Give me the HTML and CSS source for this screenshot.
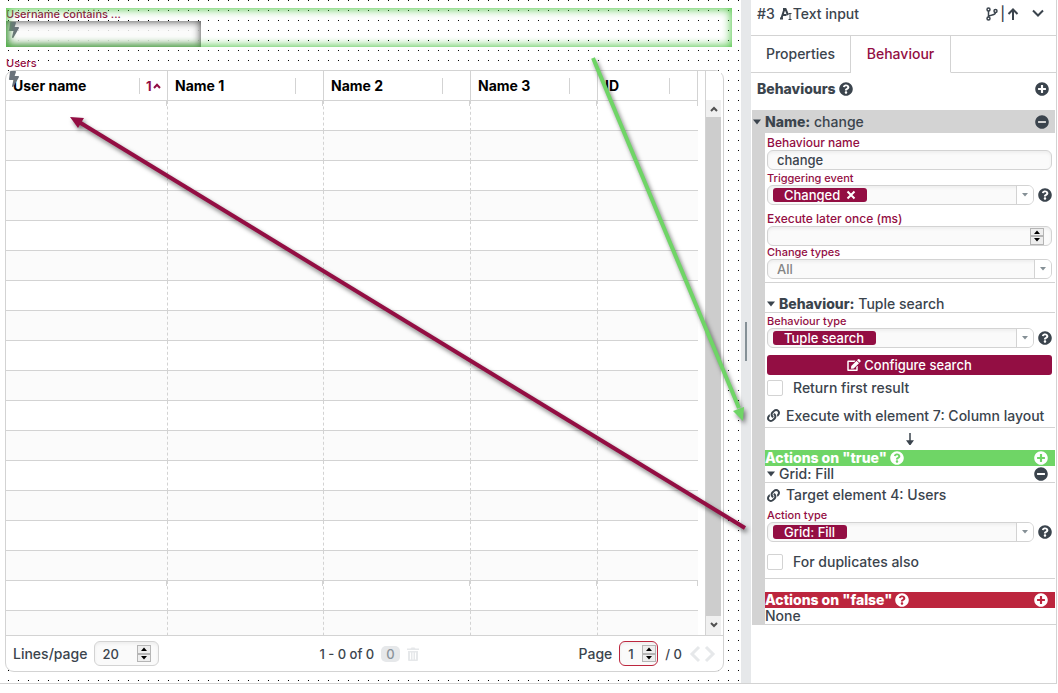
FILE: index.html
```
<!doctype html>
<html lang="en">
    <head>
        <meta charset="UTF-8" />
        <meta name="viewport" content="width=device-width, initial-scale=1.0" />
        <title>Screen editor</title>
        <link rel="stylesheet" href="styles.css">
    </head>
    <body>
        <svg class="sprite" aria-hidden="true">
            <symbol id="i-help" viewBox="0 0 512 512"><path d="M504 256c0 136.997-111.043 248-248 248S8 392.997 8 256C8 119.083 119.043 8 256 8s248 111.083 248 248zM262.655 90c-54.497 0-89.255 22.957-116.549 63.758-3.536 5.286-2.353 12.415 2.715 16.258l34.699 26.31c5.205 3.947 12.621 3.008 16.665-2.122 17.864-22.658 30.113-35.797 57.303-35.797 20.429 0 45.698 13.148 45.698 32.958 0 14.976-12.363 22.667-32.534 33.976C247.128 238.528 216 254.941 216 296v4c0 6.627 5.373 12 12 12h56c6.627 0 12-5.373 12-12v-1.333c0-28.462 83.186-29.647 83.186-106.667 0-58.002-60.165-102-116.531-102zM256 338c-25.365 0-46 20.635-46 46 0 25.364 20.635 46 46 46s46-20.636 46-46c0-25.365-20.635-46-46-46z"/></symbol>
            <symbol id="i-plus" viewBox="0 0 512 512"><path d="M256 8C119 8 8 119 8 256s111 248 248 248 248-111 248-248S393 8 256 8zm144 276c0 6.6-5.4 12-12 12h-92v92c0 6.6-5.4 12-12 12h-56c-6.6 0-12-5.4-12-12v-92h-92c-6.6 0-12-5.4-12-12v-56c0-6.6 5.4-12 12-12h92v-92c0-6.6 5.4-12 12-12h56c6.6 0 12 5.4 12 12v92h92c6.6 0 12 5.4 12 12v56z"/></symbol>
            <symbol id="i-minus" viewBox="0 0 512 512"><path d="M256 8C119 8 8 119 8 256s111 248 248 248 248-111 248-248S393 8 256 8zM124 296c-6.6 0-12-5.4-12-12v-56c0-6.6 5.4-12 12-12h264c6.6 0 12 5.4 12 12v56c0 6.6-5.4 12-12 12H124z"/></symbol>
            <symbol id="i-link" viewBox="0 0 512 512"><path d="M326.612 185.391c59.747 59.809 58.927 155.698.36 214.59-.11.12-.24.25-.36.37l-67.2 67.2c-59.27 59.27-155.699 59.262-214.96 0-59.27-59.26-59.27-155.7 0-214.96l37.106-37.106c9.84-9.84 26.786-3.3 27.294 10.606.648 17.722 3.826 35.527 9.69 52.721 1.986 5.822.567 12.262-3.783 16.612l-13.087 13.087c-28.026 28.026-28.905 73.66-1.155 101.96 28.024 28.579 74.086 28.749 102.325.51l67.2-67.19c28.191-28.191 28.073-73.757 0-101.83-3.701-3.694-7.429-6.564-10.341-8.569a16.037 16.037 0 0 1-6.947-12.606c-.396-10.567 3.348-21.456 11.698-29.806l21.054-21.055c5.521-5.521 14.182-6.199 20.584-1.731a152.482 152.482 0 0 1 20.522 17.197zM467.547 44.449c-59.261-59.262-155.69-59.27-214.96 0l-67.2 67.2c-.12.12-.25.25-.36.37-58.566 58.892-59.387 154.781.36 214.59a152.454 152.454 0 0 0 20.521 17.196c6.402 4.468 15.064 3.789 20.584-1.731l21.054-21.055c8.35-8.35 12.094-19.239 11.698-29.806a16.037 16.037 0 0 0-6.947-12.606c-2.912-2.005-6.64-4.875-10.341-8.569-28.073-28.073-28.191-73.639 0-101.83l67.2-67.19c28.239-28.239 74.3-28.069 102.325.51 27.75 28.3 26.872 73.934-1.155 101.96l-13.087 13.087c-4.35 4.35-5.769 10.79-3.783 16.612 5.864 17.194 9.042 34.999 9.69 52.721.509 13.906 17.454 20.446 27.294 10.606l37.106-37.106c59.271-59.259 59.271-155.699.001-214.959z"/></symbol>
            <symbol id="i-edit" viewBox="0 0 576 512"><path d="M402.6 83.2l90.2 90.2c3.8 3.8 3.8 10 0 13.8L274.4 405.6l-92.8 10.3c-12.4 1.4-22.9-9.1-21.5-21.5l10.3-92.8L388.8 83.2c3.8-3.8 10-3.8 13.8 0zm162-22.9l-48.8-48.8c-15.2-15.2-39.9-15.2-55.2 0l-35.4 35.4c-3.8 3.8-3.8 10 0 13.8l90.2 90.2c3.8 3.8 10 3.8 13.8 0l35.4-35.4c15.2-15.3 15.2-40 0-55.2zM384 346.2V448H64V128h229.8c3.2 0 6.2-1.3 8.5-3.5l40-40c7.6-7.6 2.2-20.5-8.5-20.5H48C21.5 64 0 85.5 0 112v352c0 26.5 21.5 48 48 48h352c26.5 0 48-21.5 48-48V306.2c0-10.7-12.9-16-20.5-8.5l-40 40c-2.2 2.3-3.5 5.3-3.5 8.5z"/></symbol>
            <symbol id="i-bolt" viewBox="0 0 320 512"><path d="M296 160H180.6l42.6-129.8C227.2 15 215.7 0 200 0H56C44 0 33.8 8.9 32.2 20.8l-32 240C-1.7 275.2 9.5 288 24 288h118.7L96.6 482.5c-3.6 15.2 8 29.5 23.3 29.5 8.4 0 16.4-4.4 20.8-12l176-304c9.3-15.9-2.2-36-20.7-36z"/></symbol>
            <symbol id="i-caret" viewBox="0 0 10 6"><path d="M1 0.5h8L5 5.5z"/></symbol>
            <symbol id="i-up" viewBox="0 0 10 6"><path d="M2 5h6L5 1.5z"/></symbol>
            <symbol id="i-down" viewBox="0 0 10 6"><path d="M2 1h6L5 4.5z"/></symbol>
        </svg>

        <main class="canvas">
            <div class="field selected">
                <label class="label" for="username">Username contains ...</label>
                <input id="username" class="username" type="text" />
                <svg class="bolt"><use href="#i-bolt"/></svg>
            </div>

            <div class="label grid-label">Users</div>
            <section class="grid">
                <svg class="bolt"><use href="#i-bolt"/></svg>
                <div class="grid-body">
                    <div class="grid-rows">
                        <table>
                            <colgroup>
                                <col class="c1" /><col class="c2" /><col class="c3" /><col class="c4" /><col class="c5" />
                            </colgroup>
                            <thead>
                                <tr>
                                    <th><div class="th">User name <span class="sort">1<svg viewBox="0 0 8 6"><path d="M1 5l3-3.200 3 3.200"/></svg></span></div></th>
                                    <th><div class="th">Name 1 <span class="sort"></span></div></th>
                                    <th><div class="th">Name 2 <span class="sort"></span></div></th>
                                    <th><div class="th">Name 3 <span class="sort"></span></div></th>
                                    <th><div class="th">ID <span class="sort"></span></div></th>
                                </tr>
                            </thead>
                            <tbody>
                                <tr class="mark"><td></td><td></td><td></td><td></td><td></td></tr>
                                <tr><td></td><td></td><td></td><td></td><td></td></tr>
                                <tr><td></td><td></td><td></td><td></td><td></td></tr>
                                <tr><td></td><td></td><td></td><td></td><td></td></tr>
                                <tr><td></td><td></td><td></td><td></td><td></td></tr>
                                <tr><td></td><td></td><td></td><td></td><td></td></tr>
                                <tr><td></td><td></td><td></td><td></td><td></td></tr>
                                <tr><td></td><td></td><td></td><td></td><td></td></tr>
                                <tr><td></td><td></td><td></td><td></td><td></td></tr>
                                <tr><td></td><td></td><td></td><td></td><td></td></tr>
                                <tr><td></td><td></td><td></td><td></td><td></td></tr>
                                <tr><td></td><td></td><td></td><td></td><td></td></tr>
                                <tr><td></td><td></td><td></td><td></td><td></td></tr>
                                <tr><td></td><td></td><td></td><td></td><td></td></tr>
                                <tr><td></td><td></td><td></td><td></td><td></td></tr>
                                <tr><td></td><td></td><td></td><td></td><td></td></tr>
                                <tr class="mark"><td></td><td></td><td></td><td></td><td></td></tr>
                                <tr><td></td><td></td><td></td><td></td><td></td></tr>
                            </tbody>
                        </table>
                    </div>
                    <div class="scroll">
                        <div class="scroll-head"></div>
                        <button class="scroll-button" aria-label="Scroll up"><svg viewBox="0 0 8 6"><path d="M1 5l3-3 3 3"/></svg></button>
                        <div class="scroll-thumb"></div>
                        <button class="scroll-button" aria-label="Scroll down"><svg viewBox="0 0 8 6"><path d="M1 1l3 3 3-3"/></svg></button>
                    </div>
                </div>
                <footer class="grid-footer">
                    <div class="group">
                        <label for="lines">Lines/page</label>
                        <span class="number">
                            <input id="lines" type="number" value="20" />
                            <span class="spin">
                                <button aria-label="More lines"><svg><use href="#i-up"/></svg></button>
                                <button aria-label="Fewer lines"><svg><use href="#i-down"/></svg></button>
                            </span>
                        </span>
                    </div>
                    <div class="group">
                        <span>1 - 0 of 0</span>
                        <span class="count">0</span>
                        <button class="plain faint" aria-label="Delete"><svg class="trash" viewBox="0 0 12 14"><path d="M0 1.500h3.500L4.500 0.500h3L8.500 1.500H12V3H0zM1 4h10v9q0 1-1 1H2q-1 0-1-1zM3 5.500v7h1v-7zM5.500 5.500v7h1v-7zM8 5.500v7h1v-7z" fill-rule="evenodd"/></svg></button>
                    </div>
                    <div class="group">
                        <label for="page">Page</label>
                        <span class="number page">
                            <input id="page" type="number" value="1" />
                            <span class="spin">
                                <button aria-label="Next"><svg><use href="#i-up"/></svg></button>
                                <button aria-label="Previous"><svg><use href="#i-down"/></svg></button>
                            </span>
                        </span>
                        <span>/ 0</span>
                        <div class="pager faint">
                            <button class="plain" aria-label="Previous page"><svg viewBox="0 0 12 18"><path d="M10 2L3 9l7 7"/></svg></button>
                            <button class="plain" aria-label="Next page"><svg viewBox="0 0 12 18"><path d="M2 2l7 7-7 7"/></svg></button>
                        </div>
                    </div>
                </footer>
            </section>
        </main>

        <div class="splitter"><div class="handle"></div></div>

        <aside class="panel">
            <header class="panel-title">
                <span>#3</span>
                <svg class="type-icon" viewBox="0 0 14 14"><path class="letter" d="M1 11.500h3M2.500 11L5.500 2h1L9 8M3.500 8h4M4 2h2.500"/><path class="cursor" d="M9.500 6.500h3M9.500 12.500h3M11 6.500v6"/></svg>
                <span>Text input</span>
                <div class="title-actions">
                    <svg class="branch" viewBox="0 0 12 14"><circle cx="2.500" cy="2.500" r="1.500"/><circle cx="2.500" cy="11.500" r="1.500"/><circle cx="9.500" cy="4" r="1.500"/><path d="M2.500 4v6M9.500 5.500c0 3-4 2-7 4"/></svg>
                    <span>|</span>
                    <button class="plain" aria-label="Parent"><svg class="arrow-up" viewBox="0 0 12 12"><path d="M6 12V1.500M1.500 6L6 1.500 10.500 6"/></svg></button>
                    <button class="plain collapse" aria-label="Collapse"><svg class="chevron" viewBox="0 0 12 12"><path d="M1 2.500l5 5 5-5"/></svg></button>
                </div>
            </header>

            <nav class="tabs">
                <button class="tab">Properties</button>
                <button class="tab active">Behaviour</button>
            </nav>

            <div class="row heading">
                <strong>Behaviours</strong>
                <svg class="icon"><use href="#i-help"/></svg>
                <button class="plain end" aria-label="Add behaviour"><svg class="icon"><use href="#i-plus"/></svg></button>
            </div>

            <section class="behaviour">
                <div class="row name-bar">
                    <svg class="caret"><use href="#i-caret"/></svg>
                    <span><strong>Name:</strong> change</span>
                    <button class="plain end" aria-label="Remove behaviour"><svg class="icon"><use href="#i-minus"/></svg></button>
                </div>
                <div class="behaviour-body">
                    <div class="form">
                        <label class="label large" for="bname">Behaviour name</label>
                        <input id="bname" class="box text" type="text" value="change" />

                        <label class="label" for="trigger">Triggering event</label>
                        <div class="with-help">
                            <div class="box combo">
                                <span class="chip">
                                    <select id="trigger"><option>Changed</option></select>
                                    <button aria-label="Remove Changed"><svg viewBox="0 0 10 10"><path d="M1.500 1.500l7 7M8.500 1.500l-7 7"/></svg></button>
                                </span>
                                <span class="drop"><svg><use href="#i-down"/></svg></span>
                            </div>
                            <svg class="icon"><use href="#i-help"/></svg>
                        </div>

                        <label class="label large later" for="delay">Execute later once (ms)</label>
                        <span class="box delay">
                            <input id="delay" type="number" />
                            <span class="spin">
                                <button aria-label="Increase"><svg><use href="#i-up"/></svg></button>
                                <button aria-label="Decrease"><svg><use href="#i-down"/></svg></button>
                            </span>
                        </span>

                        <label class="label" for="types">Change types</label>
                        <div class="box combo">
                            <select id="types" class="empty"><option>All</option></select>
                            <span class="drop"><svg><use href="#i-down"/></svg></span>
                        </div>
                    </div>

                    <div class="row sub-title">
                        <svg class="caret"><use href="#i-caret"/></svg>
                        <span><strong>Behaviour:</strong> Tuple search</span>
                    </div>
                    <div class="form search">
                        <label class="label" for="btype">Behaviour type</label>
                        <div class="with-help">
                            <div class="box combo">
                                <span class="chip"><select id="btype"><option>Tuple search</option></select></span>
                                <span class="drop"><svg><use href="#i-down"/></svg></span>
                            </div>
                            <svg class="icon"><use href="#i-help"/></svg>
                        </div>
                        <button class="configure"><svg><use href="#i-edit"/></svg>Configure search</button>
                        <label class="check"><input type="checkbox" />Return first result</label>
                        <a class="target execute" href="#"><svg><use href="#i-link"/></svg>Execute with element 7: Column layout</a>
                    </div>

                    <div class="flow">
                        <svg viewBox="0 0 8 12"><path d="M4 0v9M1.500 8L4 11.500 6.500 8z"/></svg>
                    </div>

                    <div class="row actions on-true">
                        <strong>Actions on "true"</strong>
                        <svg class="icon"><use href="#i-help"/></svg>
                        <button class="plain end" aria-label="Add action on true"><svg class="icon"><use href="#i-plus"/></svg></button>
                    </div>
                    <div class="row action-name">
                        <svg class="caret"><use href="#i-caret"/></svg>
                        <span>Grid: Fill</span>
                        <button class="plain end" aria-label="Remove action"><svg class="icon"><use href="#i-minus"/></svg></button>
                    </div>
                    <div class="form last">
                        <a class="target" href="#"><svg><use href="#i-link"/></svg>Target element 4: Users</a>
                        <label class="label action-label" for="atype">Action type</label>
                        <div class="with-help">
                            <div class="box combo">
                                <span class="chip"><select id="atype"><option>Grid: Fill</option></select></span>
                                <span class="drop"><svg><use href="#i-down"/></svg></span>
                            </div>
                            <svg class="icon"><use href="#i-help"/></svg>
                        </div>
                        <label class="check duplicates"><input type="checkbox" />For duplicates also</label>
                    </div>

                    <div class="row actions on-false">
                        <strong>Actions on "false"</strong>
                        <svg class="icon"><use href="#i-help"/></svg>
                        <button class="plain end" aria-label="Add action on false"><svg class="icon"><use href="#i-plus"/></svg></button>
                    </div>
                    <div class="none">None</div>
                </div>
            </section>
        </aside>

        <!-- Connections between an element and its behaviour -->
        <svg class="connections" width="760" height="560" aria-hidden="true">
            <g class="to-panel">
                <path class="line" d="M593 58L739 408"/>
                <path class="head" d="M733 411l11-4-1 14z"/>
            </g>
            <g class="to-grid">
                <path class="line" d="M745 528L79 122"/>
                <path class="head" d="M70 117l14 1-6 10z"/>
            </g>
        </svg>
    </body>
</html>
```
FILE: styles.css
```
*,
*::before,
*::after {
    margin: 0;
    padding: 0;
    box-sizing: border-box;
}

:root {
    --text: #3b444d;
    --brand: #930e43;
    --line: #d3d3d3;
    --green: #6fd566;
    --red: #bc263e;
}

body {
    display: flex;
    min-height: 100vh;
    padding-bottom: 9px;
    padding-right: 1px;
    background: #fff;
    color: var(--text);
    font-family: Inter, "Open Sans", sans-serif;
    font-size: 13px;
    font-weight: 500;
    line-height: 16px;
}

input,
select,
button {
    border: 0;
    background: none;
    color: inherit;
    font: inherit;
    appearance: none;
}

input[type="number"] {
    min-width: 0;
    appearance: textfield;
}

input::-webkit-inner-spin-button {
    display: none;
}

a {
    color: inherit;
    text-decoration: none;
}

svg {
    display: block;
    flex: none;
    fill: currentColor;
}

strong {
    font-weight: 800;
}

.sprite {
    display: none;
}

.label {
    display: block;
    color: var(--brand);
    font-size: 11px;
    line-height: 13px;
}

.large {
    font-size: 12px;
    line-height: 15px;
}

.plain {
    display: flex;
}

.faint {
    color: #e6e8ea;
}

.end {
    margin-left: auto;
}

.icon {
    width: 14px;
    height: 14px;
}

.caret {
    width: 10px;
    height: 6px;
}

/* Canvas */
.canvas {
    display: flex;
    flex: 1;
    flex-direction: column;
    min-width: 0;
    padding: 8px 9px 11px 5px;
    border-bottom: 1px solid var(--line);
    /* white strips over black lines leave one dot every 10px */
    background-image:
        linear-gradient(90deg, #fff 8px, transparent 8px, transparent 9px, #fff 9px),
        linear-gradient(#000 1px, #fff 1px);
    background-size: 10px 10px;
}

.field {
    position: relative;
    margin-left: 1px;
}

.selected::after {
    content: "";
    position: absolute;
    inset: 0;
    box-shadow: inset 0 0 10px 1px #4cc442;
    pointer-events: none;
}

.bolt {
    position: absolute;
    top: 14px;
    left: 3px;
    width: 10px;
    height: 16px;
    color: #6b737b;
}

.username {
    display: block;
    width: 195px;
    height: 26px;
    background: rgba(250, 250, 250, 0.85);
    box-shadow: inset 0 0 8px #333;
}

.grid-label {
    margin: 10px 0 0 1px;
}

.grid {
    position: relative;
    display: flex;
    flex: 1;
    flex-direction: column;
    margin-right: 8px;
    border: 1px solid var(--line);
    border-radius: 9px;
    background: #fff;
}

.grid .bolt {
    top: 0;
    left: 3px;
}

.grid-body {
    display: flex;
    flex: 1 1 0;
    min-height: 0;
    padding-right: 2px;
    overflow: hidden;
}

.grid-rows {
    flex: 1;
    overflow: hidden;
    margin-right: 7px;
}

table {
    width: 100%;
    table-layout: fixed;
    border-collapse: separate;
    border-spacing: 0;
}

.c1 { width: 162px; }
.c2 { width: 156px; }
.c3 { width: 147px; }
.c4 { width: 127px; }

th {
    height: 30px;
    border-right: 1px solid var(--line);
    border-bottom: 1px solid var(--line);
    color: #000;
    font-size: 14px;
    font-weight: 700;
    text-align: left;
}

.th {
    display: flex;
    justify-content: space-between;
    padding-left: 7px;
}

.sort {
    display: flex;
    align-items: center;
    gap: 1px;
    width: 28px;
    padding-left: 6px;
    border-left: 1px solid var(--line);
    color: var(--brand);
    font-size: 13px;
}

.sort svg {
    width: 8px;
    height: 6px;
    fill: none;
    stroke: currentColor;
    stroke-width: 2;
}

td {
    height: 30px;
    border-right: 1px dashed var(--line);
    border-bottom: 1px solid var(--line);
}

td:last-child {
    border-right: 0;
}

tbody tr:nth-child(even) {
    background: #fbfbfb;
}

.mark td {
    background: linear-gradient(var(--line), var(--line)) right top / 1px 5px no-repeat;
}

.scroll {
    display: flex;
    flex-direction: column;
    width: 16px;
    padding-bottom: 2px;
    border-left: 1px solid var(--line);
    background: #f0f0f0;
}

.scroll-head {
    height: 29px;
    background: #fff;
}

.scroll-button {
    display: flex;
    align-items: center;
    justify-content: center;
    height: 17px;
    color: #505050;
}

.scroll-button svg {
    width: 8px;
    height: 6px;
    fill: none;
    stroke: currentColor;
    stroke-width: 2;
}

.scroll-thumb {
    flex: 1;
    background: #cdcdcd;
}

.grid-footer {
    display: flex;
    align-items: center;
    justify-content: space-between;
    height: 36px;
    padding: 0 7px;
    border-top: 1px solid var(--line);
}

.group {
    display: flex;
    align-items: center;
    gap: 7px;
}

.group label {
    font-size: 14px;
}

.number,
.box {
    border: 1px solid var(--line);
    border-radius: 6px;
    background: #fafafa;
    box-shadow: inset 0 2px 3px #eee;
}

.number {
    display: flex;
    align-items: center;
    width: 65px;
    height: 25px;
    padding: 0 7px;
}

.number input {
    flex: 1;
}

.number.page {
    width: 39px;
    padding: 0 1px 0 8px;
    border-color: var(--red);
}

.spin {
    display: grid;
    grid-template-rows: 1fr 1fr;
    width: 14px;
    height: 17px;
    color: #000;
}

.spin button {
    display: flex;
    align-items: center;
    justify-content: center;
    border: 1px solid #b5b5b5;
    background: #eee;
}

.spin svg {
    width: 10px;
    height: 6px;
}

.count {
    padding: 0 5px;
    border-radius: 5px;
    background: #e6e8ea;
    color: #8b949b;
}

.trash {
    width: 12px;
    height: 14px;
}

.pager {
    display: flex;
    gap: 3px;
}

.pager svg {
    width: 12px;
    height: 18px;
    fill: none;
    stroke: currentColor;
    stroke-width: 3;
}

/* Splitter */
.splitter {
    display: flex;
    align-items: center;
    justify-content: center;
    width: 10px;
    border-bottom: 1px solid var(--line);
    background: #e6e8ea;
}

.handle {
    width: 2px;
    height: 39px;
    background: #859096;
}

/* Property panel */
.panel {
    width: 306px;
    border-right: 1px solid var(--line);
    border-bottom: 1px solid var(--line);
    font-size: 14px;
}

.panel-title {
    display: flex;
    align-items: center;
    height: 36px;
    padding: 0 12px 8px 6px;
    border-bottom: 1px solid var(--line);
}

.type-icon {
    width: 14px;
    height: 14px;
    margin-left: 4px;
    fill: none;
    stroke: currentColor;
}

.type-icon .letter {
    stroke-width: 2;
}

.title-actions {
    display: flex;
    align-items: center;
    gap: 2px;
    margin-left: auto;
}

.title-actions svg {
    width: 12px;
    height: 12px;
    fill: none;
    stroke: currentColor;
    stroke-width: 2;
}

.title-actions .branch {
    height: 14px;
    stroke-width: 1.5;
}

.collapse {
    margin-left: 11px;
}

.tabs {
    display: flex;
    height: 37px;
}

.tabs::after {
    content: "";
    flex: 1;
    border-bottom: 1px solid var(--line);
}

.tab {
    width: 100px;
    border-right: 1px solid var(--line);
    border-bottom: 1px solid var(--line);
}

.tab.active {
    border-bottom-color: transparent;
    color: var(--brand);
}

.row {
    display: flex;
    align-items: center;
    gap: 3px;
}

.heading {
    height: 31px;
    margin-bottom: 6px;
    padding: 0 7px 0 6px;
}

.behaviour {
    margin-left: 1px;
    border-bottom: 1px solid var(--line);
}

.name-bar {
    height: 23px;
    margin-right: 1px;
    padding-right: 6px;
    background: var(--line);
}

.behaviour-body {
    border-left: 13px solid var(--line);
    padding-right: 1px;
}

.form {
    display: flex;
    flex-direction: column;
    padding: 2px 3px 3px 2px;
    border-bottom: 1px solid var(--line);
}

.form.search {
    padding-bottom: 0;
}

.form.last {
    padding-bottom: 8px;
}

.box {
    display: flex;
    align-items: center;
    flex: 1;
    height: 20px;
    font-size: 13px;
}

.form > .box {
    flex: none;
}

.form .text {
    margin-bottom: 2px;
    padding: 0 9px;
}

.with-help {
    display: flex;
    align-items: center;
    gap: 4px;
}

.chip {
    display: flex;
    align-items: center;
    height: 14px;
    margin-left: 5px;
    padding: 0 11px;
    border-radius: 3px;
    background: var(--brand);
    color: #fff;
    line-height: 14px;
}

.chip button {
    margin-left: 5px;
}

.chip svg {
    width: 10px;
    height: 10px;
    stroke: currentColor;
    stroke-width: 2;
}

.empty {
    flex: 1;
    padding-left: 9px;
    color: #858585;
}

.drop {
    display: flex;
    align-items: center;
    justify-content: center;
    align-self: stretch;
    width: 17px;
    margin-left: auto;
    border-left: 1px solid var(--line);
    border-radius: 0 5px 5px 0;
    background: #fff;
    color: #859096;
}

.drop svg {
    width: 10px;
    height: 6px;
}

.later {
    margin-top: 6px;
}

.delay {
    padding-right: 7px;
}

.delay input {
    flex: 1;
}

.sub-title {
    height: 30px;
    padding: 13px 0 0 1px;
    border-bottom: 1px solid var(--line);
}

.configure {
    display: flex;
    align-items: center;
    justify-content: center;
    gap: 3px;
    height: 20px;
    margin-top: 7px;
    border-radius: 3px;
    background: var(--brand);
    color: #fff;
    font-size: 13px;
}

.configure svg {
    width: 14px;
    height: 12px;
}

.check {
    display: flex;
    align-items: center;
    gap: 10px;
    margin-top: 5px;
}

.check input {
    width: 16px;
    height: 16px;
    border: 1px solid var(--line);
    border-radius: 2px;
}

.target {
    display: flex;
    align-items: center;
    gap: 6px;
    height: 20px;
    white-space: nowrap;
}

.target svg {
    width: 13px;
    height: 13px;
}

.execute {
    height: 23px;
    margin-top: 8px;
}

.action-label {
    margin-top: 4px;
}

.flow {
    display: flex;
    align-items: center;
    justify-content: center;
    height: 22px;
}

.flow svg {
    width: 8px;
    height: 12px;
    stroke: currentColor;
    stroke-width: 1.5;
}

.actions {
    height: 16px;
    padding-right: 7px;
    color: #fff;
}

.on-true {
    background: var(--green);
}

.on-false {
    margin-top: 13px;
    background: var(--red);
}

.action-name {
    height: 17px;
    padding: 0 7px 0 1px;
    border-bottom: 1px solid var(--line);
}

.duplicates {
    margin-top: 12px;
}

/* Connections */
.connections {
    position: absolute;
    top: 0;
    left: 0;
    pointer-events: none;
    filter: drop-shadow(2px 3px 2px rgba(0, 0, 0, 0.5));
}

.connections .line {
    fill: none;
    stroke: currentColor;
    stroke-width: 4;
}

.to-panel {
    color: var(--green);
}

.to-grid {
    color: var(--brand);
}
```
